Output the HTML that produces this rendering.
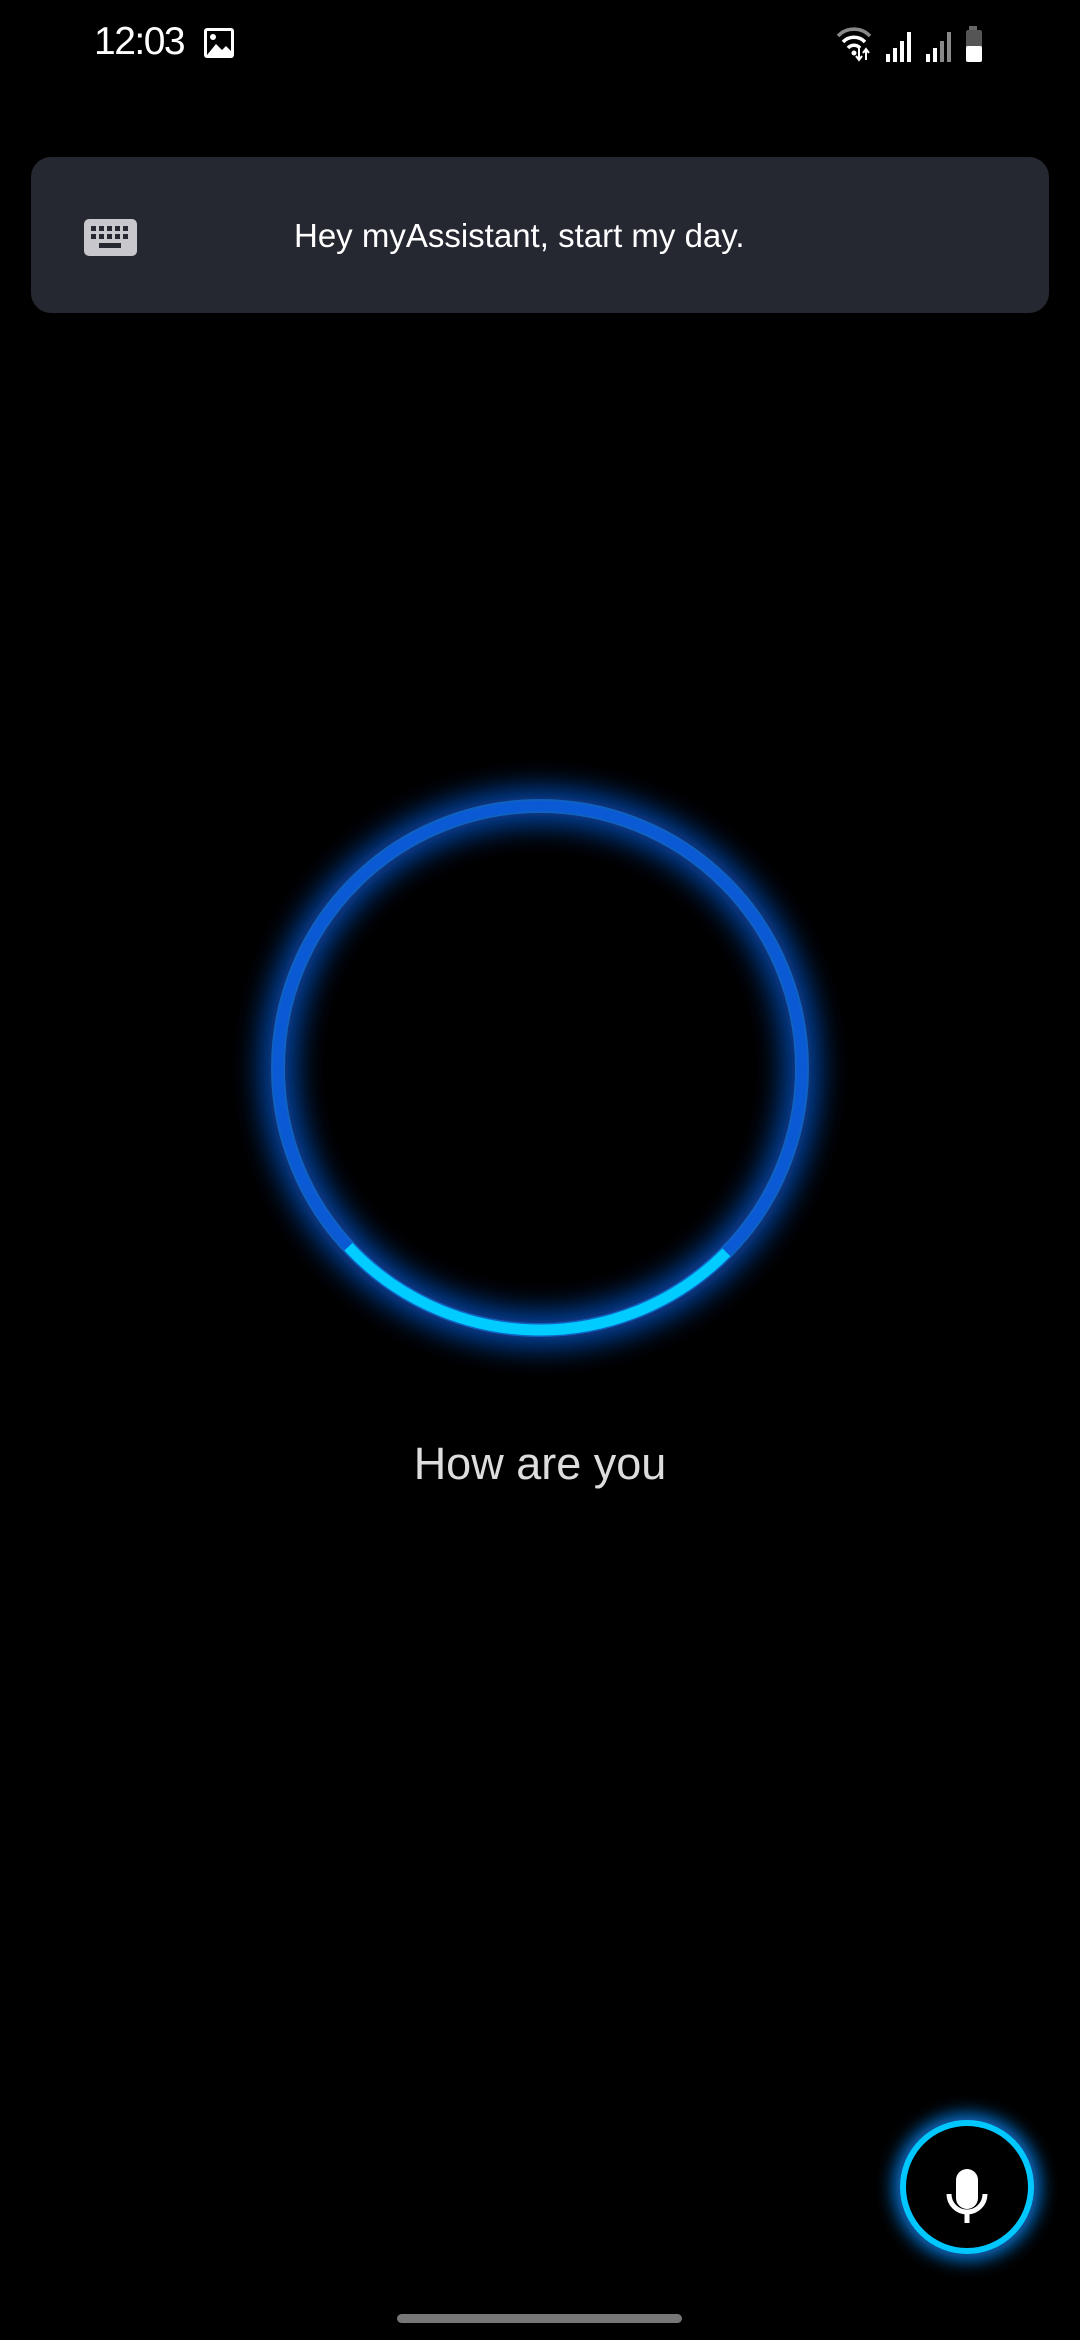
<!DOCTYPE html>
<html><head><meta charset="utf-8"><style>
html,body{margin:0;padding:0;background:#000;width:1080px;height:2340px;overflow:hidden;font-family:"Liberation Sans",sans-serif;color:#fff}
.abs{position:absolute}
</style></head><body>
<div class="abs" style="left:94px;top:20px;font-size:39px;letter-spacing:-1.5px">12:03</div>
<svg class="abs" style="left:203px;top:27px" width="32" height="32" viewBox="0 0 32 32"><rect x="1" y="1" width="30" height="30" rx="3" fill="#fff"/><rect x="4" y="4" width="24" height="24" fill="#000"/><circle cx="10" cy="10" r="3" fill="#fff"/><path d="M4 28 L13 17 L19 23 L23 19 L28 24 L28 28Z" fill="#fff"/></svg>
<svg class="abs" style="left:836px;top:24px" width="160" height="40" viewBox="0 0 160 40">
<path d="M2 12 A22 22 0 0 1 34 12" stroke="#888" stroke-width="3.5" fill="none"/>
<path d="M7 18 A15 15 0 0 1 29 18" stroke="#fff" stroke-width="3.5" fill="none"/>
<path d="M12 24 A8 8 0 0 1 24 24" stroke="#fff" stroke-width="3.5" fill="none"/>
<circle cx="18" cy="29" r="2.5" fill="#fff"/>
<path d="M23 24v12M20 32l3 4 3-4M30 36V26M27 29l3-4 3 4" stroke="#fff" stroke-width="2" fill="none"/>
<rect x="50" y="30" width="4" height="8" fill="#fff"/><rect x="57" y="24" width="4" height="14" fill="#fff"/><rect x="64" y="17" width="4" height="21" fill="#fff"/><rect x="71" y="8" width="4" height="30" fill="#fff"/>
<rect x="90" y="30" width="4" height="8" fill="#fff"/><rect x="97" y="24" width="4" height="14" fill="#fff"/><rect x="104" y="17" width="4" height="21" fill="#888"/><rect x="111" y="8" width="4" height="30" fill="#888"/>
<rect x="133" y="2" width="8" height="5" fill="#666"/><rect x="130" y="6" width="16" height="32" rx="2" fill="#555"/><rect x="130" y="22" width="16" height="16" rx="2" fill="#fff"/>
</svg>
<div class="abs" style="left:31px;top:157px;width:1018px;height:156px;border-radius:20px;background:#262831"></div>
<svg class="abs" style="left:84px;top:219px" width="53" height="37" viewBox="0 0 53 37"><rect width="53" height="37" rx="5" fill="#c7c7cc"/>
<g fill="#262831"><rect x="7" y="7" width="5" height="5"/><rect x="15" y="7" width="5" height="5"/><rect x="23" y="7" width="5" height="5"/><rect x="31" y="7" width="5" height="5"/><rect x="39" y="7" width="5" height="5"/>
<rect x="7" y="15" width="5" height="5"/><rect x="15" y="15" width="5" height="5"/><rect x="23" y="15" width="5" height="5"/><rect x="31" y="15" width="5" height="5"/><rect x="39" y="15" width="5" height="5"/>
<rect x="15" y="24" width="22" height="5"/></g></svg>
<div class="abs" style="left:294px;top:217px;font-size:33px">Hey myAssistant, start my day.</div>
<svg class="abs" style="left:0;top:700px" width="1080" height="740" viewBox="0 700 1080 740">
<defs><filter id="g" x="-30%" y="-30%" width="160%" height="160%"><feGaussianBlur stdDeviation="16"/></filter></defs>
<circle cx="540" cy="1068" r="262" stroke="#0a6cff" stroke-width="26" fill="none" filter="url(#g)" opacity="0.9"/>
<circle cx="540" cy="1068" r="262" stroke="#1a8cff" stroke-width="14" fill="none" opacity="0.5"/>
<circle cx="540" cy="1068" r="262" stroke="#0a5ad6" stroke-width="10" fill="none"/>
<path d="M726.4 1252.2 A262 262 0 0 1 348.4 1246.7" stroke="#00ccff" stroke-width="11" fill="none"/>
</svg>
<div class="abs" style="left:0;width:1080px;top:1438px;text-align:center;font-size:45px;color:#ddd">How are you</div>
<svg class="abs" style="left:867px;top:2087px" width="200" height="200" viewBox="0 0 200 200">
<defs><filter id="g2" x="-40%" y="-40%" width="180%" height="180%"><feGaussianBlur stdDeviation="9"/></filter></defs>
<circle cx="100" cy="100" r="64" stroke="#0a8cff" stroke-width="16" fill="none" filter="url(#g2)"/>
<circle cx="100" cy="100" r="64" fill="#000" stroke="#00c8ff" stroke-width="6"/>
<rect x="89" y="82" width="22" height="40" rx="11" fill="#fff"/>
<path d="M82 107 A18 18 0 0 0 118 107" stroke="#fff" stroke-width="5" fill="none"/>
<rect x="97.5" y="124" width="5" height="12" fill="#fff"/>
</svg>
<div class="abs" style="left:397px;top:2314px;width:285px;height:9px;border-radius:5px;background:#777"></div>
</body></html>
